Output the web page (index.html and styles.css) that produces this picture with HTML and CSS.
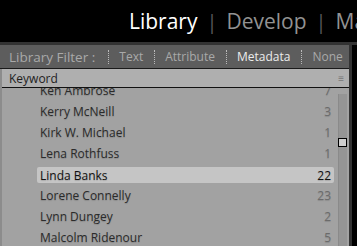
FILE: index.html
```html
<!DOCTYPE html>
<html lang="en">
<head>
  <meta charset="UTF-8" />
  <title>Library</title>
  <link rel="stylesheet" href="styles.css">
</head>
<body>
  <div class="topnav">
    <span class="module active">Library</span>
    <span class="sep">|</span>
    <span class="module">Develop</span>
    <span class="sep">|</span>
    <span class="module">Map</span>
  </div>
  <div class="main">
    <div class="panel">
      <div class="filterbar">
        <span class="flabel">Library Filter :</span>
        <span class="fitem">Text</span>
        <span class="fitem">Attribute</span>
        <span class="fitem on">Metadata</span>
        <span class="fitem">None</span>
      </div>
      <div class="colhead">
        <span>Keyword</span>
        <span class="menu">&#8801;</span>
      </div>
      <div class="listwrap">
        <ul class="list">
          <li><span>Ken Ambrose</span><span class="count">7</span></li>
          <li><span>Kerry McNeill</span><span class="count">3</span></li>
          <li><span>Kirk W. Michael</span><span class="count">1</span></li>
          <li><span>Lena Rothfuss</span><span class="count">1</span></li>
          <li class="sel"><span>Linda Banks</span><span class="count">22</span></li>
          <li><span>Lorene Connelly</span><span class="count">23</span></li>
          <li><span>Lynn Dungey</span><span class="count">2</span></li>
          <li><span>Malcolm Ridenour</span><span class="count">5</span></li>
        </ul>
        <div class="scroll"><div class="thumb"></div></div>
      </div>
    </div>
    <div class="edge"></div>
  </div>
</body>
</html>
```

FILE: styles.css
```css
body {
  margin: 0;
  background: #000;
  font-family: "Open Sans", "Liberation Sans", sans-serif;
  overflow: hidden;
}
.topnav {
  height: 42px;
  display: flex;
  align-items: center;
  padding-left: 129px;
  white-space: nowrap;
  font-size: 21px;
  color: #929292;
  overflow: hidden;
}
.module.active {
  color: #fff;
}
.sep {
  margin: 0 9px;
  color: #5a5a5a;
  font-size: 20px;
}
.main {
  display: flex;
  border-top: 3px solid #333;
}
.panel {
  width: 349px;
  background: #a2a2a2;
  border-left: 2px solid #8c8c8c;
  box-sizing: border-box;
}
.edge {
  width: 3px;
  background: #333;
}
.filterbar {
  height: 23px;
  margin-left: -2px;
  background: #5d5d5d;
  border-bottom: 1px solid #1a1a1a;
  display: flex;
  align-items: center;
  padding-left: 9px;
  font-size: 12px;
  color: #a9a9a9;
  white-space: nowrap;
}
.flabel {
  font-size: 13.5px;
  margin-right: 13px;
}
.fitem {
  border-left: 1px dotted #bbb;
  padding: 0 11px 0 10px;
  line-height: 14px;
}
.fitem.on {
  color: #ececec;
}
.colhead {
  height: 18px;
  background: #afafaf;
  border-bottom: 1px solid #111;
  display: flex;
  align-items: center;
  justify-content: space-between;
  padding: 0 5px 0 7px;
  font-size: 12px;
  color: #1e1e1e;
}
.menu {
  font-size: 10px;
  color: #777;
}
.listwrap {
  display: flex;
  height: 160px;
  overflow: hidden;
}
.list {
  list-style: none;
  margin: -8px 0 0 35px;
  padding: 0;
  width: 297px;
}
.list li {
  height: 21px;
  display: flex;
  align-items: center;
  justify-content: space-between;
  padding: 0 3px 0 3px;
  font-size: 12px;
  color: #2b2b2b;
  text-shadow: 0 1px 1px rgba(0,0,0,0.15);
}
.list li.sel {
  background: #c5c5c5;
  height: 16px;
  margin: 3px 0 2px;
  border-radius: 2px;
  color: #111;
}
.count {
  color: #6b6b6b;
}
.sel .count {
  color: #111;
}
.scroll {
  width: 8px;
  margin: 6px 0 0 4px;
  background: #959595;
  border-left: 1px solid #8a8a8a;
  position: relative;
}
.thumb {
  position: absolute;
  top: 44px;
  left: -1px;
  width: 7px;
  height: 7px;
  background: #cfcfcf;
  border: 1px solid #000;
}
```
